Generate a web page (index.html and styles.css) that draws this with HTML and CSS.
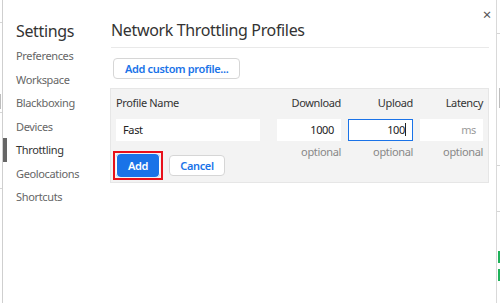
FILE: index.html
```html
<!DOCTYPE html>
<html>
<head>
    <link rel="stylesheet" href="styles.css">
</head>
<body>
    <div class="screen">
        <div class="edge edge-left">
            <span class="tick t-left-1"></span>
            <span class="block b-left"></span>
            <span class="tick t-left-2"></span>
            <span class="tick t-left-3"></span>
        </div>

        <div class="dialog">
            <div class="close">&times;</div>

            <div class="sidebar">
                <h1>Settings</h1>
                <ul class="tabs">
                    <li>Preferences</li>
                    <li>Workspace</li>
                    <li>Blackboxing</li>
                    <li>Devices</li>
                    <li class="active">Throttling</li>
                    <li>Geolocations</li>
                    <li>Shortcuts</li>
                </ul>
            </div>

            <div class="content">
                <h2>Network Throttling Profiles</h2>
                <div class="toolbar">
                    <button class="btn">Add custom profile...</button>
                </div>

                <div class="editor">
                    <div class="label">Profile Name</div>
                    <div class="label right">Download</div>
                    <div class="label right">Upload</div>
                    <div class="label right">Latency</div>

                    <div class="field name">Fast</div>
                    <div class="field num">1000</div>
                    <div class="field num focused">100<span class="caret"></span></div>
                    <div class="field num placeholder">ms</div>

                    <div class="actions">
                        <span class="ring"><button class="btn primary">Add</button></span>
                        <button class="btn cancel">Cancel</button>
                    </div>
                    <div class="hint">optional</div>
                    <div class="hint">optional</div>
                    <div class="hint">optional</div>
                </div>
            </div>
        </div>

        <div class="edge edge-right">
            <span class="tick t-right-1"></span>
            <span class="block b-right"></span>
            <span class="tick t-right-2"></span>
            <span class="tick t-right-3"></span>
            <span class="green g1"></span>
            <span class="green g2"></span>
        </div>
    </div>
</body>
</html>
```

FILE: styles.css
```css
html, body {
    margin: 0;
    padding: 0;
    background: #fff;
}
body {
    font-family: "Noto Sans", "Open Sans", sans-serif;
    font-size: 11px;
    letter-spacing: -0.35px;
    color: #333;
}
.screen {
    display: flex;
    width: 500px;
    height: 303px;
    overflow: hidden;
}

/* page behind the dialog */
.edge {
    display: flex;
    flex-direction: column;
    background: #fff;
}
.edge-left {
    width: 2px;
}
.edge-right {
    width: 3px;
}
.tick {
    display: block;
    height: 1px;
    background: #d6d6d6;
}
.block {
    display: block;
    background: #bdbdbd;
}
.green {
    display: block;
    height: 12px;
    background: #1fb25a;
    margin-left: 1px;
}
.t-left-1 { margin-top: 22px; }
.b-left { margin-top: 71px; height: 15px; width: 1px; }
.t-left-2 { margin-top: 3px; }
.t-left-3 { margin-top: 75px; }
.t-right-1 { margin-top: 33px; }
.b-right { margin-top: 54px; height: 20px; width: 1px; margin-left: 2px; }
.t-right-2 { margin-top: 57px; }
.t-right-3 { margin-top: 45px; }
.g1 { margin-top: 39px; }
.g2 { margin-top: 6px; }

/* dialog */
.dialog {
    position: relative;
    flex: 1;
    display: flex;
    background: #fff;
    border-left: 1px solid #cfcfcf;
    border-right: 1px solid #d9d9d9;
}
.close {
    position: absolute;
    top: 6px;
    right: 5px;
    font-size: 15px;
    color: #555;
    line-height: 16px;
}

.sidebar {
    width: 107px;
    flex-shrink: 0;
}
.sidebar h1 {
    margin: 0;
    padding: 20px 0 0 13px;
    font-size: 16px;
    font-weight: normal;
    line-height: 22px;
    color: #333;
}
.tabs {
    list-style: none;
    margin: 2px 0 0;
    padding: 0;
}
.tabs li {
    padding-left: 13px;
    line-height: 23.5px;
    color: #666;
}
.tabs li.active {
    border-left: 4px solid #666;
    padding-left: 9px;
    color: #333;
}

.content {
    width: 379px;
}
.content h2 {
    margin: 0 0 0 1px;
    padding: 20px 0 6px 0;
    font-size: 16px;
    font-weight: normal;
    line-height: 21px;
    color: #333;
    border-bottom: 1px solid #e9e9e9;
}
.toolbar {
    padding: 10px 0 9px 3px;
}
.btn {
    font-family: inherit;
    font-size: 11px;
    letter-spacing: -0.35px;
    font-weight: 600;
    color: #1a73e8;
    background: #fff;
    border: 1px solid #d6d6d6;
    border-radius: 4px;
    height: 21px;
    padding: 0 11px;
    cursor: pointer;
}

.editor {
    display: grid;
    grid-template-columns: 154px 64px 65px 63px;
    grid-template-rows: 30px 22px 41px;
    column-gap: 7px;
    background: #f3f3f3;
    border: 1px solid #e6e6e6;
    padding: 0 5px 0 5px;
}
.label {
    align-self: center;
    padding-bottom: 4px;
    color: #333;
}
.right {
    text-align: right;
}
.field {
    background: #fff;
    padding: 0 6px;
    color: #222;
    border: 1px solid transparent;
    line-height: 20px;
}
.field.name {
    width: 130px;
}
.num {
    text-align: right;
}
.focused {
    border-color: #1a73e8;
}
.caret {
    display: inline-block;
    width: 1px;
    height: 13px;
    background: #222;
    vertical-align: -2px;
}
.placeholder {
    color: #9a9a9a;
}
.hint {
    text-align: right;
    color: #888;
    line-height: 16px;
    padding-top: 3px;
}
.actions {
    display: flex;
    align-items: center;
    gap: 6px;
    padding-top: 7px;
    margin-left: -3px;
}
.ring {
    display: flex;
    border: 2px solid #e8101a;
    padding: 1px;
}
.btn.primary {
    height: 23px;
    width: 44px;
    padding: 0;
    background: #1a73e8;
    border: none;
    color: #fff;
    box-shadow: inset 1px 0 0 #fff, inset -1px 0 0 #fff;
}
.btn.cancel {
    width: 56px;
    padding: 0;
}
```
